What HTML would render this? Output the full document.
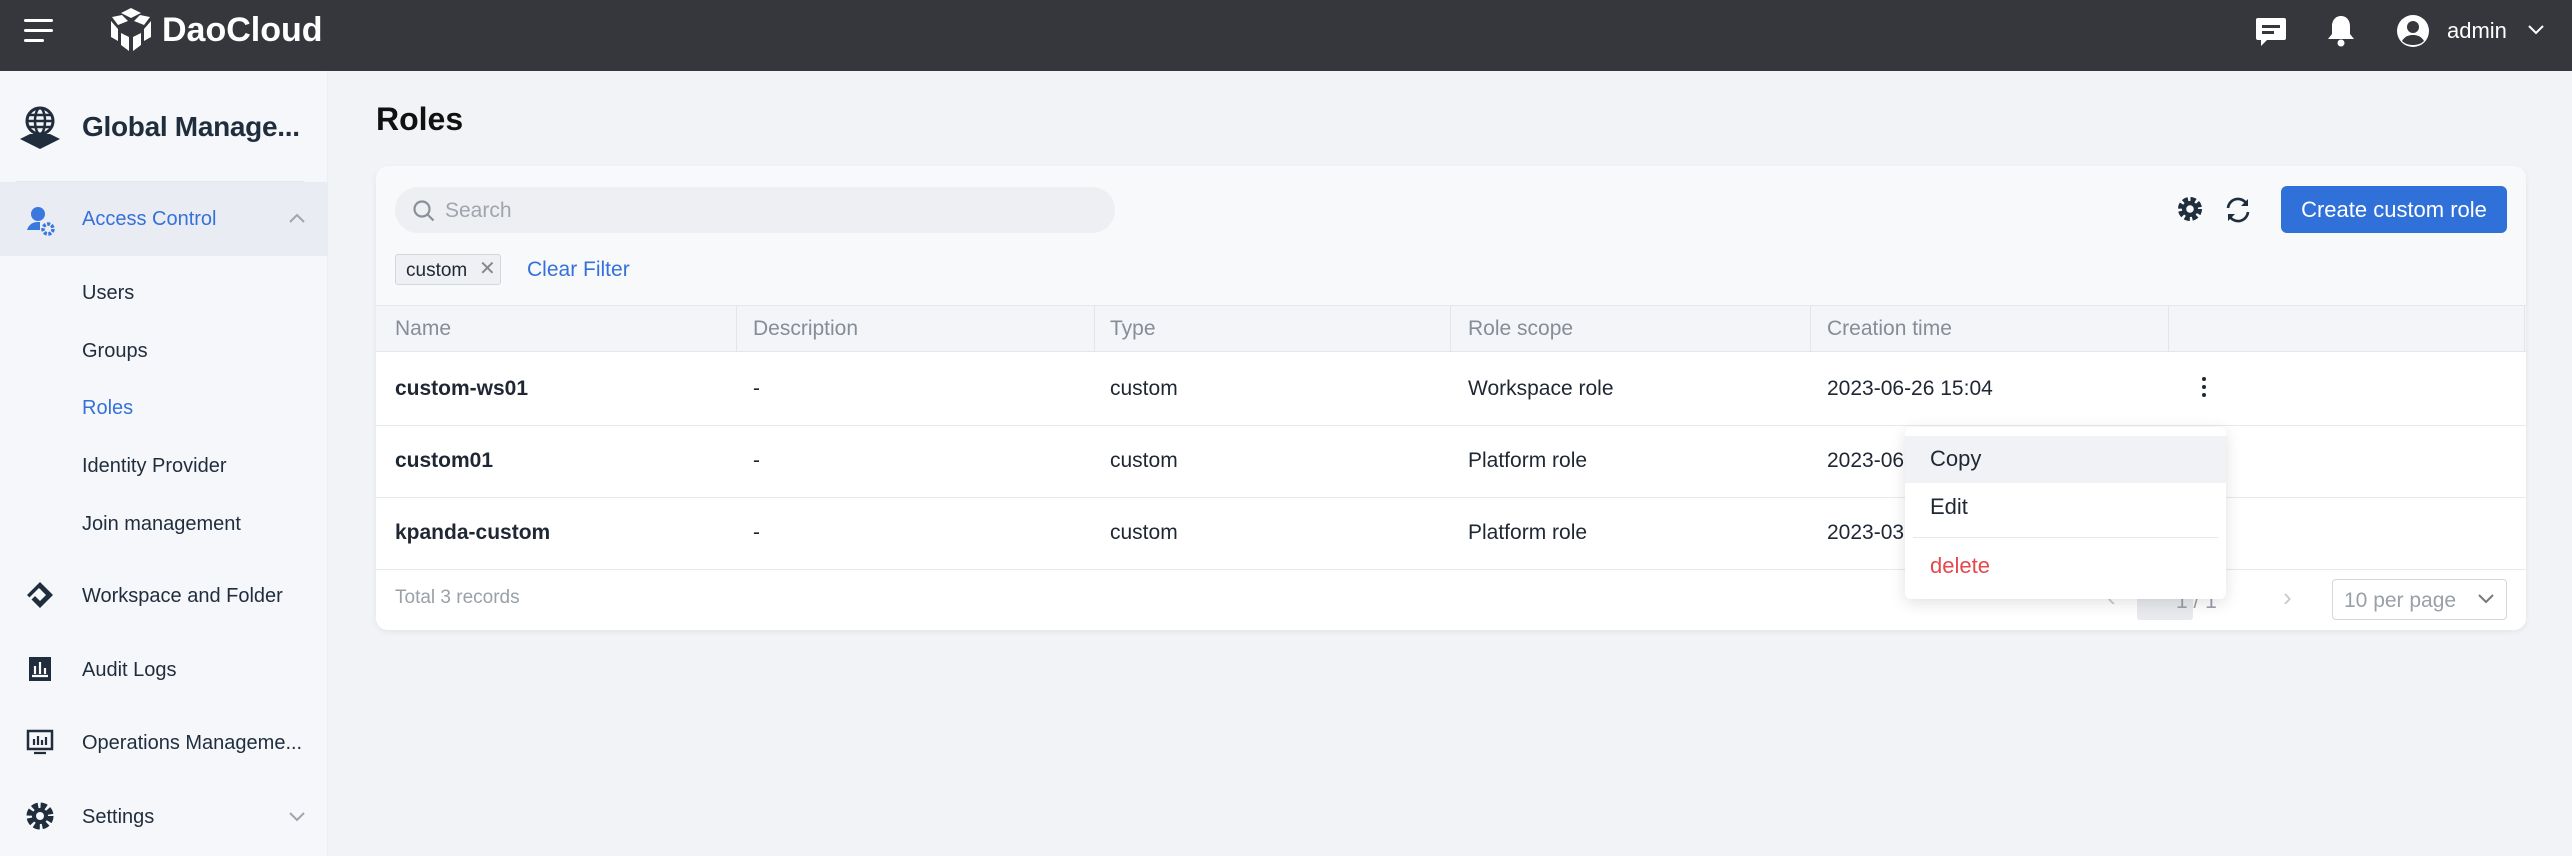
<!DOCTYPE html>
<html><head><meta charset="utf-8"><style>
*{box-sizing:border-box;margin:0;padding:0}
body{width:2572px;height:856px;overflow:hidden;background:#f1f3f7;font-family:"Liberation Sans",sans-serif;color:#1f2733;position:relative}
.abs{position:absolute}
.top{left:0;top:0;width:2572px;height:71px;background:#35373d}
.side{left:0;top:71px;width:328px;height:785px;background:#f6f7fa;border-right:1px solid #eceef2}
.nav{position:absolute;left:82px;font-size:20px;color:#1f2d3d;line-height:1}
.card{left:376px;top:166px;width:2150px;height:464px;background:#f8f9fb;border-radius:12px;box-shadow:0 2px 6px rgba(0,0,0,.06);overflow:hidden}
.cell{position:absolute;font-size:21px;line-height:1}
.hd{color:#868d97}
.vl{position:absolute;top:139px;width:1px;height:47px;background:#e2e5ea}
.hl{position:absolute;left:0;width:2150px;height:1px;background:#e6e8ec}
</style></head><body>
<div class="abs top"></div>
<div class="abs" style="left:24px;top:19px;width:29px;height:3px;background:#fff;border-radius:2px"></div>
<div class="abs" style="left:24px;top:29px;width:29px;height:3px;background:#fff;border-radius:2px"></div>
<div class="abs" style="left:24px;top:39px;width:20px;height:3px;background:#fff;border-radius:2px"></div>
<svg class="abs" style="left:109px;top:7px" width="44" height="47" viewBox="0 0 44 47"><path d="M22 1 L32 6 L22 11 L12 6Z M3 10 L13 8 L19 14 L9 18Z M41 10 L31 8 L25 14 L35 18Z M2 14 L9 22 L9 34 L2 30Z M42 14 L35 22 L35 34 L42 30Z M12 26 L20 30 L20 44 L12 38Z M32 26 L24 30 L24 44 L32 38Z" fill="#fff"/></svg>
<div class="abs" style="left:162px;top:12px;font-size:34px;font-weight:bold;color:#fff;line-height:1.1">DaoCloud</div>
<svg class="abs" style="left:2255px;top:17px" width="32" height="30" viewBox="0 0 32 30"><path d="M3 1h26a2 2 0 0 1 2 2v18a2 2 0 0 1-2 2H12l-6 6v-6H3a2 2 0 0 1-2-2V3a2 2 0 0 1 2-2z" fill="#fff"/><rect x="7" y="8" width="18" height="3" fill="#35373d"/><rect x="7" y="14" width="12" height="3" fill="#35373d"/></svg>
<svg class="abs" style="left:2326px;top:14px" width="30" height="34" viewBox="0 0 30 34"><path d="M15 2c-6 0-9 5-9 10v8l-4 5h26l-4-5v-8c0-5-3-10-9-10z" fill="#fff"/><circle cx="15" cy="29" r="3.5" fill="#fff"/></svg>
<svg class="abs" style="left:2395px;top:13px" width="36" height="36" viewBox="0 0 36 36"><circle cx="18" cy="18" r="16" fill="#fff"/><circle cx="18" cy="14" r="6" fill="#35373d"/><path d="M7 28c3-5 7-6 11-6s8 1 11 6c-3 3-7 4-11 4s-8-1-11-4z" fill="#35373d"/></svg>
<div class="abs" style="left:2447px;top:18px;font-size:22px;color:#fff">admin</div>
<svg class="abs" style="left:2528px;top:25px" width="16" height="10" viewBox="0 0 16 10"><path d="M1 1l7 7 7-7" stroke="#fff" stroke-width="2" fill="none"/></svg>

<div class="abs side"></div>
<svg class="abs" style="left:18px;top:105px" width="44" height="46" viewBox="0 0 44 46"><circle cx="22" cy="16" r="13" fill="none" stroke="#1f2d3d" stroke-width="3"/><ellipse cx="22" cy="16" rx="5" ry="13" fill="none" stroke="#1f2d3d" stroke-width="2.5"/><path d="M9 16h26M11 10h22M11 22h22" stroke="#1f2d3d" stroke-width="2.5"/><path d="M2 34l10-5h20l10 5-20 10z" fill="#1f2d3d"/></svg>
<div class="nav" style="left:82px;top:113px;font-size:28px;font-weight:bold;color:#1f2d3d;letter-spacing:-0.3px">Global Manage...</div>
<div class="abs" style="left:16px;top:181px;width:288px;height:1px;background:#e3e6eb"></div>
<div class="abs" style="left:0;top:182px;width:328px;height:74px;background:#e9ecf3"></div>
<svg class="abs" style="left:26px;top:206px" width="30" height="30" viewBox="0 0 30 30"><circle cx="12" cy="8" r="7" fill="#3a78de"/><path d="M1 24c2-6 6-8 11-8h2v8z" fill="#3a78de"/><circle cx="22" cy="23" r="5" fill="none" stroke="#3a78de" stroke-width="3.5" stroke-dasharray="3 1.5"/></svg>
<div class="nav" style="top:209px;color:#3571d9">Access Control</div>
<svg class="abs" style="left:289px;top:213px" width="16" height="10" viewBox="0 0 16 10"><path d="M1 9l7-7 7 7" stroke="#a0a5ad" stroke-width="2" fill="none"/></svg>
<div class="nav" style="top:283px">Users</div>
<div class="nav" style="top:341px">Groups</div>
<div class="nav" style="top:398px;color:#3571d9">Roles</div>
<div class="nav" style="top:456px">Identity Provider</div>
<div class="nav" style="top:514px">Join management</div>
<svg class="abs" style="left:26px;top:581px" width="28" height="28" viewBox="0 0 28 28"><path d="M14 1l13 13-13 13L1 14z M14 8l-6 6 6 6 6-6z" fill="#1f2d3d" fill-rule="evenodd"/><path d="M4 18l10-10" stroke="#f6f7fa" stroke-width="3"/></svg>
<div class="nav" style="top:586px">Workspace and Folder</div>
<svg class="abs" style="left:28px;top:655px" width="24" height="28" viewBox="0 0 24 28"><rect x="1" y="2" width="22" height="24" fill="#1f2d3d"/><path d="M7 19v-8M12 19v-12M17 19v-6M4 21h16" stroke="#fff" stroke-width="2.2"/></svg>
<div class="nav" style="top:660px">Audit Logs</div>
<svg class="abs" style="left:26px;top:728px" width="28" height="28" viewBox="0 0 28 28"><rect x="2" y="3" width="24" height="18" fill="none" stroke="#1f2d3d" stroke-width="2.5"/><path d="M8 17v-6M12 17v-9M16 17v-5M20 17v-8M8 25h12" stroke="#1f2d3d" stroke-width="2.2"/></svg>
<div class="nav" style="top:733px">Operations Manageme...</div>
<svg class="abs" style="left:26px;top:802px" width="28" height="28" viewBox="0 0 28 28"><circle cx="14" cy="14" r="10" fill="none" stroke="#1f2d3d" stroke-width="7" stroke-dasharray="5.5 2.4"/><circle cx="14" cy="14" r="8" fill="#1f2d3d"/><circle cx="14" cy="14" r="4" fill="#f6f7fa"/></svg>
<div class="nav" style="top:807px">Settings</div>
<svg class="abs" style="left:289px;top:812px" width="16" height="10" viewBox="0 0 16 10"><path d="M1 1l7 7 7-7" stroke="#a0a5ad" stroke-width="2" fill="none"/></svg>

<div class="abs" style="left:376px;top:101px;font-size:32px;font-weight:bold;color:#111">Roles</div>
<div class="abs card">
  <div class="abs" style="left:19px;top:21px;width:720px;height:46px;border-radius:23px;background:#edeff3"></div>
  <svg class="abs" style="left:36px;top:33px" width="24" height="24" viewBox="0 0 24 24"><circle cx="10" cy="10" r="7.5" fill="none" stroke="#8a9099" stroke-width="2.2"/><path d="M15.5 15.5l6 6" stroke="#8a9099" stroke-width="2.2"/></svg>
  <div class="cell" style="left:69px;top:34px;color:#a0a5ad">Search</div>
  <div class="abs" style="left:19px;top:88px;width:106px;height:31px;border:1px solid #d3d6dc;border-radius:3px;background:#eef0f3"></div>
  <div class="cell" style="left:30px;top:95px;font-size:19px">custom</div>
  <div class="cell" style="left:103px;top:93px;font-size:20px;color:#888">✕</div>
  <div class="cell" style="left:151px;top:93px;color:#3571d9">Clear Filter</div>
  <svg class="abs" style="left:1800px;top:29px" width="28" height="28" viewBox="0 0 28 28"><circle cx="14" cy="14" r="9" fill="none" stroke="#1f2d3d" stroke-width="6" stroke-dasharray="4.8 2.3"/><circle cx="14" cy="14" r="8" fill="#1f2d3d"/><circle cx="14" cy="14" r="3.8" fill="#f8f9fb"/></svg>
  <svg class="abs" style="left:1847px;top:29px" width="30" height="30" viewBox="0 0 30 30"><path d="M5 13a10 10 0 0 1 18-5M25 17a10 10 0 0 1-18 5" fill="none" stroke="#1f2d3d" stroke-width="2.6"/><path d="M25 4v7h-7z M5 26v-7h7z" fill="#1f2d3d"/></svg>
  <div class="abs" style="left:1905px;top:20px;width:226px;height:47px;background:#3070d9;border-radius:6px;color:#fff;font-size:22px;text-align:center;line-height:47px">Create custom role</div>
  <div class="abs" style="left:0;top:139px;width:2150px;height:47px;background:#f4f5f8;border-top:1px solid #e3e6ea;border-bottom:1px solid #e3e6ea"></div>
  <div class="vl" style="left:360px"></div><div class="vl" style="left:718px"></div><div class="vl" style="left:1074px"></div><div class="vl" style="left:1434px"></div><div class="vl" style="left:1792px"></div><div class="vl" style="left:2148px"></div>
  <div class="cell hd" style="left:19px;top:152px">Name</div>
  <div class="cell hd" style="left:377px;top:152px">Description</div>
  <div class="cell hd" style="left:734px;top:152px">Type</div>
  <div class="cell hd" style="left:1092px;top:152px">Role scope</div>
  <div class="cell hd" style="left:1451px;top:152px">Creation time</div>
  <div class="abs" style="left:0;top:186px;width:2150px;height:278px;background:#fff"></div>
  <div class="hl" style="top:259px"></div><div class="hl" style="top:331px"></div><div class="hl" style="top:403px"></div>
  <div class="cell" style="left:19px;top:212px;font-weight:bold">custom-ws01</div>
  <div class="cell" style="left:377px;top:212px">-</div>
  <div class="cell" style="left:734px;top:212px">custom</div>
  <div class="cell" style="left:1092px;top:212px">Workspace role</div>
  <div class="cell" style="left:1451px;top:212px">2023-06-26 15:04</div>
  <div class="abs" style="left:1826px;top:211px;width:4px;height:4px;border-radius:2px;background:#1f2733;box-shadow:0 8px 0 #1f2733,0 16px 0 #1f2733"></div>
  <div class="cell" style="left:19px;top:284px;font-weight:bold">custom01</div>
  <div class="cell" style="left:377px;top:284px">-</div>
  <div class="cell" style="left:734px;top:284px">custom</div>
  <div class="cell" style="left:1092px;top:284px">Platform role</div>
  <div class="cell" style="left:1451px;top:284px">2023-06-</div>
  <div class="cell" style="left:19px;top:356px;font-weight:bold">kpanda-custom</div>
  <div class="cell" style="left:377px;top:356px">-</div>
  <div class="cell" style="left:734px;top:356px">custom</div>
  <div class="cell" style="left:1092px;top:356px">Platform role</div>
  <div class="cell" style="left:1451px;top:356px">2023-03</div>
  <div class="cell" style="left:19px;top:422px;font-size:19px;color:#9aa0a8">Total 3 records</div>
  <div class="cell" style="left:1731px;top:418px;font-size:26px;color:#c7cbd1">‹</div>
  <div class="abs" style="left:1761px;top:425px;width:56px;height:29px;background:#e8eaee;border-radius:3px"></div>
  <div class="cell" style="left:1800px;top:425px;color:#9aa0a8">1 / 1</div>
  <div class="cell" style="left:1907px;top:418px;font-size:26px;color:#c7cbd1">›</div>
  <div class="abs" style="left:1956px;top:413px;width:175px;height:41px;border:1px solid #d3d6dc;border-radius:4px;background:#fff"></div>
  <div class="cell" style="left:1968px;top:424px;color:#9aa0a8">10 per page</div>
  <svg class="abs" style="left:2102px;top:428px" width="16" height="10" viewBox="0 0 16 10"><path d="M1 1l7 7 7-7" stroke="#777" stroke-width="2" fill="none"/></svg>
</div>
<div class="abs" style="left:1905px;top:427px;width:321px;height:172px;background:#fff;border-radius:6px;box-shadow:0 4px 16px rgba(0,0,0,.12)"></div>
<div class="abs" style="left:1905px;top:436px;width:321px;height:47px;background:#f1f2f6"></div>
<div class="cell abs" style="left:1930px;top:448px;font-size:22px">Copy</div>
<div class="cell abs" style="left:1930px;top:496px;font-size:22px">Edit</div>
<div class="abs" style="left:1913px;top:537px;width:305px;height:1px;background:#e6e8ec"></div>
<div class="cell abs" style="left:1930px;top:555px;font-size:22px;color:#e5484d">delete</div>
</body></html>
